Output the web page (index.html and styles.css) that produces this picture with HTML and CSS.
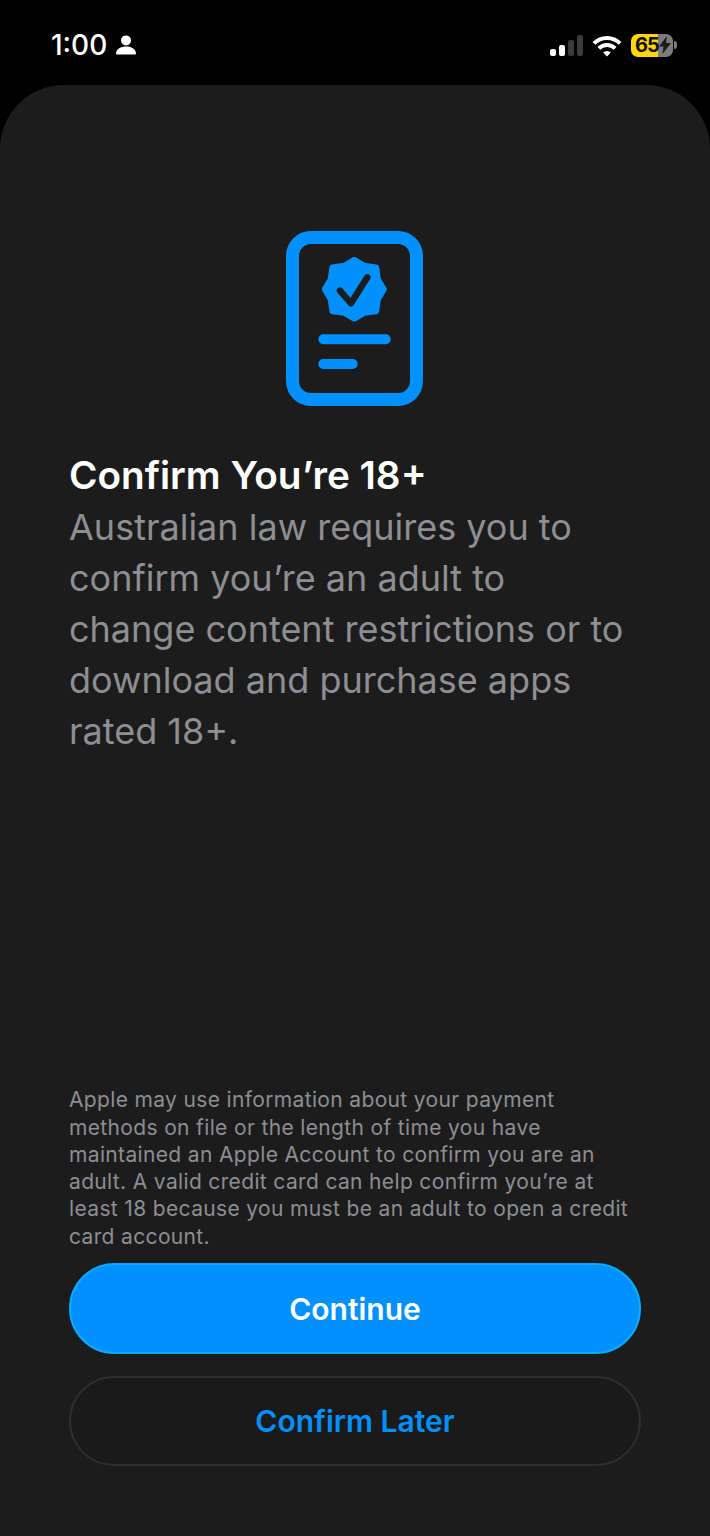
FILE: index.html
```html
<!DOCTYPE html>
<html lang="en">
<head>
    <meta charset="UTF-8">
    <meta name="viewport" content="width=device-width, initial-scale=1.0">
    <title>Confirm You're 18+</title>
    <link rel="stylesheet" href="styles.css">
</head>

<body>
    <div class="status-bar">
        <div class="status-left">
            <span class="status-time">1:00</span>
            <svg class="status-person" width="20" height="20" viewBox="0 0 20 20">
                <circle cx="10" cy="5.4" r="5" fill="#fff"/>
                <path d="M1 19.5c-.5 0-1-.5-1-1.2C.4 14 4.6 11.6 10 11.6s9.600 2.400 10 6.700c0 .7-.5 1.200-1 1.200z" fill="#fff"/>
            </svg>
        </div>
        <div class="status-right">
            <div class="signal">
                <span class="signal-bar bar1"></span>
                <span class="signal-bar bar2"></span>
                <span class="signal-bar bar3"></span>
                <span class="signal-bar bar4"></span>
            </div>
            <svg class="wifi" width="30" height="23" viewBox="0 0 30 23" fill="none" stroke="#fff" stroke-width="4">
                <path d="M1.900 9.400a18.500 18.500 0 0 1 26.200 0"/>
                <path d="M6.900 14.400a11.500 11.500 0 0 1 16.200 0"/>
                <path d="M11.200 18.600a5.400 5.400 0 0 1 7.600 0L15 22.500z" fill="#fff" stroke="none"/>
            </svg>
            <div class="battery">
                <div class="battery-body">
                    <span class="battery-level">65</span>
                    <svg class="battery-bolt" width="12" height="18" viewBox="0 0 12 18">
                        <path d="M8 0L0 10.500h4.500L3.500 18 12 7H7z" fill="#1c1c1c"/>
                    </svg>
                </div>
                <span class="battery-nub"></span>
            </div>
        </div>
    </div>

    <div class="sheet">
        <svg class="doc-icon" width="137" height="175" viewBox="0 0 137 175">
            <rect x="6.500" y="6.500" width="124" height="162" rx="18.500" fill="none" stroke="#0091ff" stroke-width="13"/>
            <polygon points="68.300,28.800 78.100,34.700 90.200,36.400 91.900,48.500 97.800,58.300 91.900,68.100 90.200,80.200 78.100,81.900 68.300,87.800 58.500,81.900 46.400,80.200 44.700,68.100 38.800,58.300 44.700,48.500 46.400,36.400 58.500,34.700" fill="#0091ff" stroke="#0091ff" stroke-width="6" stroke-linejoin="round"/>
            <path d="M54 59.700L65 72.300 81.300 46.300" fill="none" stroke="#1c1c1c" stroke-width="6.500" stroke-linecap="round" stroke-linejoin="round"/>
            <path d="M37.300 108.300H99.700M37.300 133H66.700" fill="none" stroke="#0091ff" stroke-width="10" stroke-linecap="round"/>
        </svg>

        <h1 class="sheet-title">Confirm You’re 18+</h1>
        <p class="sheet-text">Australian law requires you to confirm you’re an adult to change content restrictions or to download and purchase apps rated 18+.</p>

        <div class="sheet-footer">
            <p class="fine-print">Apple may use information about your payment methods on file or the length of time you have maintained an Apple Account to confirm you are an adult. A valid credit card can help confirm you’re at least 18 because you must be an adult to open a credit card account.</p>
            <button class="btn btn-primary">Continue</button>
            <button class="btn btn-secondary">Confirm Later</button>
        </div>
    </div>
</body>
</html>
```

FILE: styles.css
```css
body {
    display: flex;
    flex-direction: column;
    height: 1536px;
    margin: 0;
    overflow: hidden;
    font-family: 'Inter', 'Liberation Sans', sans-serif;
    background-color: #000000;
}

.status-bar {
    display: flex;
    align-items: flex-start;
    justify-content: space-between;
    height: 85px;
    padding: 0 33px 0 51px;
    box-sizing: border-box;
    flex-shrink: 0;
}

.status-left {
    display: flex;
    align-items: center;
    gap: 9px;
    margin-top: 29px;
    height: 32px;
}

.status-time {
    font-size: 28px;
    font-weight: 500;
    color: #ffffff;
}

.status-right {
    display: flex;
    align-items: center;
    margin-top: 33px;
    height: 24px;
}

.signal {
    display: flex;
    align-items: flex-end;
    gap: 3px;
    height: 21px;
    margin-right: 9px;
}

.signal-bar {
    width: 6px;
    border-radius: 2px;
    background-color: #3a3a3c;
}

.bar1 {
    height: 7px;
    background-color: #ffffff;
}

.bar2 {
    height: 11px;
    background-color: #ffffff;
}

.bar3 {
    height: 16px;
}

.bar4 {
    height: 21px;
}

.wifi {
    margin-right: 9px;
}

.battery {
    display: flex;
    align-items: center;
    gap: 1px;
}

.battery-body {
    display: flex;
    align-items: center;
    width: 42px;
    height: 23px;
    border-radius: 7px;
    background: linear-gradient(to right, #ffd60a 27px, #7c7c7e 27px);
    overflow: hidden;
}

.battery-level {
    width: 28px;
    padding-left: 4px;
    box-sizing: border-box;
    font-size: 20px;
    font-weight: 700;
    letter-spacing: -1px;
    color: #111111;
}

.battery-bolt {
    flex-shrink: 0;
}

.battery-nub {
    width: 3px;
    height: 8px;
    border-radius: 0 3px 3px 0;
    background-color: #7c7c7e;
}

.sheet {
    display: flex;
    flex-direction: column;
    flex: 1;
    padding: 146px 69px 70px 69px;
    border-radius: 64px 64px 0 0;
    background-color: #1c1c1c;
}

.doc-icon {
    align-self: center;
    flex-shrink: 0;
    margin-right: 1px;
    margin-bottom: 43px;
}

.sheet-title {
    margin: 0;
    font-size: 38.700px;
    line-height: 53px;
    font-weight: 600;
    color: #ffffff;
}

.sheet-text {
    margin: 0;
    font-size: 36px;
    line-height: 51px;
    color: #8e8e93;
}

.sheet-footer {
    display: flex;
    flex-direction: column;
    margin-top: auto;
}

.fine-print {
    margin: 0 0 13px 0;
    font-size: 21px;
    line-height: 27.300px;
    letter-spacing: 0.35px;
    color: #8e8e93;
}

.btn {
    border-radius: 46px;
    font-family: inherit;
    font-size: 30px;
    font-weight: 600;
}

.btn-primary {
    height: 91px;
    border: 2px solid #0aabff;
    background-color: #0091ff;
    color: #ffffff;
    margin-bottom: 22px;
}

.btn-secondary {
    height: 90px;
    border: 2px solid #2e2e2e;
    background-color: #1a1a1a;
    color: #0091ff;
}
```
